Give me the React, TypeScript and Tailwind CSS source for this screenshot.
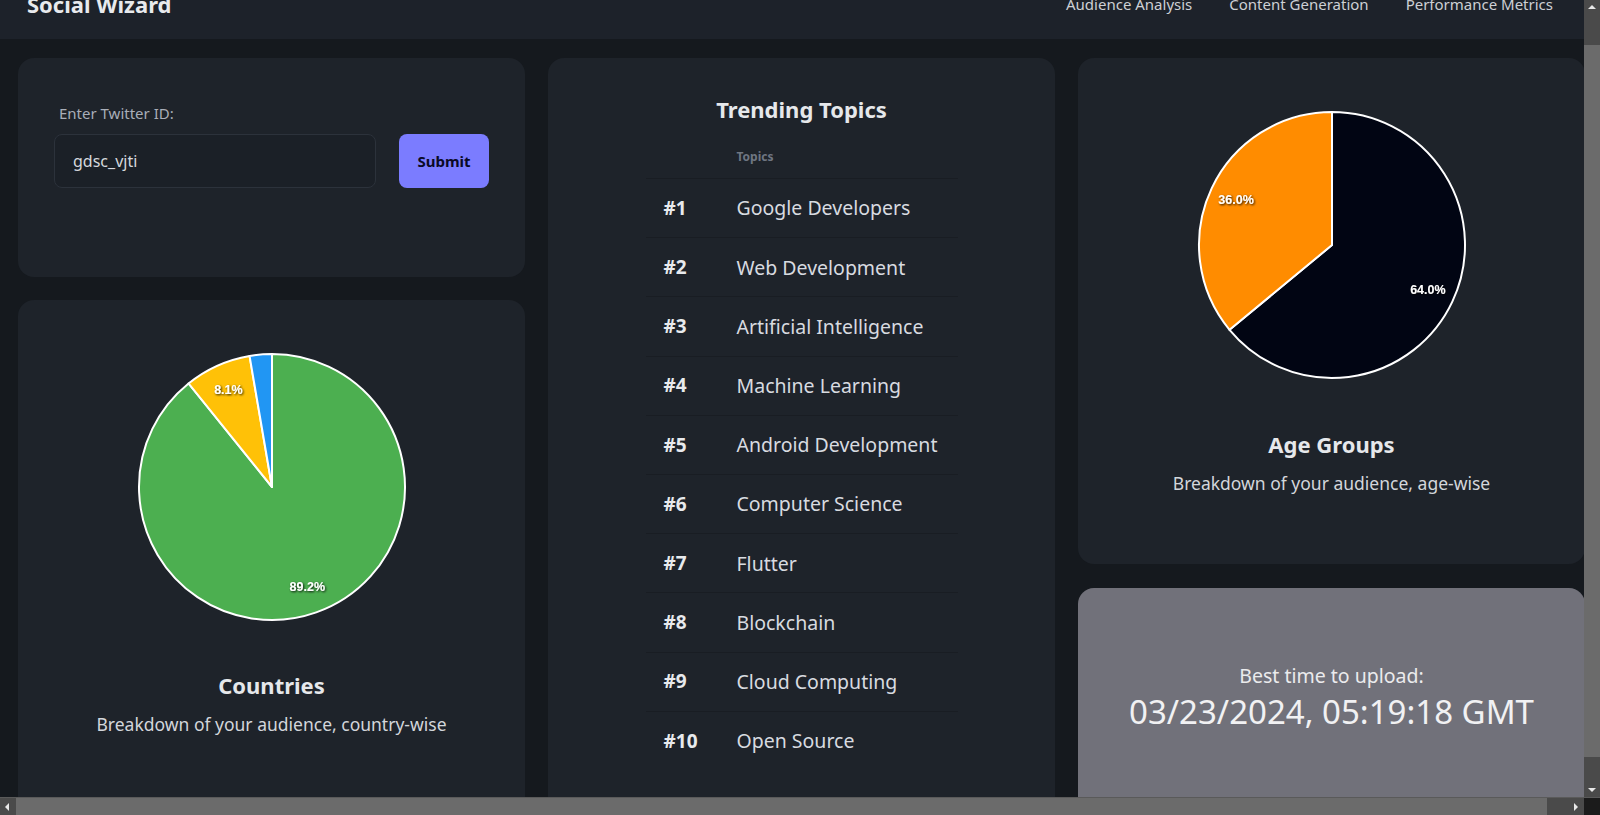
import React from "react";

type Slice = { value: number; color: string; label?: string };

function polar(c: number, r: number, frac: number): [number, number] {
  const a = frac * 2 * Math.PI;
  return [c + r * Math.sin(a), c - r * Math.cos(a)];
}

function Pie({ data, id }: { data: Slice[]; id: string }) {
  const c = 135;
  const r = 133;
  let acc = 0;
  const slices = data.map((d) => {
    const start = acc;
    acc += d.value;
    return { ...d, start, end: acc };
  });
  return (
    <svg width={270} height={270} viewBox="0 0 270 270">
      <defs>
        <filter id={id} x="-50%" y="-50%" width="200%" height="200%">
          <feDropShadow dx="1" dy="1" stdDeviation="1" floodColor="#000" floodOpacity="0.9" />
        </filter>
      </defs>
      {slices.map((s, i) => {
        const [x1, y1] = polar(c, r, s.start);
        const [x2, y2] = polar(c, r, s.end);
        const large = s.end - s.start > 0.5 ? 1 : 0;
        return (
          <path
            key={i}
            d={`M${c},${c} L${x1},${y1} A${r},${r} 0 ${large} 1 ${x2},${y2} Z`}
            fill={s.color}
            stroke="#ffffff"
            strokeWidth={2}
            strokeLinejoin="round"
          />
        );
      })}
      {slices.map((s, i) => {
        if (!s.label) return null;
        const [x, y] = polar(c, 106, (s.start + s.end) / 2);
        return (
          <text
            key={"t" + i}
            x={x}
            y={y}
            textAnchor="middle"
            dominantBaseline="central"
            fill="#ffffff"
            fontSize={12.5}
            fontWeight={700}
            fontFamily='"Liberation Sans", Arial, sans-serif'
            filter={`url(#${id})`}
          >
            {s.label}
          </text>
        );
      })}
    </svg>
  );
}

const topics = [
  "Google Developers",
  "Web Development",
  "Artificial Intelligence",
  "Machine Learning",
  "Android Development",
  "Computer Science",
  "Flutter",
  "Blockchain",
  "Cloud Computing",
  "Open Source",
];

function Tri({ dir }: { dir: "up" | "down" | "left" | "right" }) {
  const pts =
    dir === "up"
      ? "4,9 8,5 12,9"
      : dir === "down"
      ? "4,6 8,10 12,6"
      : dir === "left"
      ? "9,4 5,8 9,12"
      : "6,4 10,8 6,12";
  return (
    <svg width={16} height={16} viewBox="0 0 16 16">
      <polygon points={pts} fill="#e8e8e8" />
    </svg>
  );
}

export default function App() {
  return (
    <div
      className="w-[1600px] h-[815px] overflow-hidden flex flex-col bg-[#15191e]"
      style={{ fontFamily: '"Noto Sans", "Open Sans", sans-serif' }}
    >
      <div className="flex flex-1 min-h-0">
        <div className="flex-1 min-w-0 overflow-hidden">
          <div className="-mt-[30px] w-[1584px]">
            <header className="h-[69px] bg-[#1d222a] flex items-center justify-between pl-[27px] pr-[31px] pb-[1px]">
              <div className="text-[22px] font-bold text-[#e8eaed]">Social Wizard</div>
              <nav className="flex gap-[37px] text-[15px] text-[#cdd0d5]">
                <span>Audience Analysis</span>
                <span>Content Generation</span>
                <span>Performance Metrics</span>
              </nav>
            </header>
            <main className="grid grid-cols-[507px_507px_507px] gap-x-[23px] pl-[18px] pt-[19px]">
              <div className="flex flex-col gap-[23px]">
                <div className="h-[219px] rounded-2xl bg-[#1e232a] pl-[36px] pt-[44px]">
                  <div className="pl-[5px] text-[15px] leading-[22px] text-[#a9aeb8]">Enter Twitter ID:</div>
                  <div className="mt-[10px] flex gap-[23px]">
                    <div className="w-[322px] h-[54px] rounded-lg border border-[#2c323b] bg-[#1b2027] flex items-center pl-[18px] text-[16px] text-[#d5d8dd]">
                      gdsc_vjti
                    </div>
                    <button className="w-[90px] h-[54px] rounded-lg bg-[#7b7cff] text-[15px] font-bold text-[#0a0a26]">
                      Submit
                    </button>
                  </div>
                </div>
                <div className="h-[520px] rounded-2xl bg-[#1e232a] flex flex-col items-center pt-[52px]">
                  <Pie
                    id="sh1"
                    data={[
                      { value: 0.892, color: "#4caf50", label: "89.2%" },
                      { value: 0.081, color: "#ffc107", label: "8.1%" },
                      { value: 0.027, color: "#2196f3" },
                    ]}
                  />
                  <div className="mt-[47px] text-[22px] leading-[32px] font-bold text-[#e6e8eb]">Countries</div>
                  <div className="mt-[10px] text-[17.5px] leading-[26px] text-[#d3d6db]">
                    Breakdown of your audience, country-wise
                  </div>
                </div>
              </div>
              <div className="h-[760px] rounded-2xl bg-[#1e232a] flex flex-col items-center pt-[35px]">
                <div className="text-[22px] leading-[32px] font-bold text-[#e6e8eb]">Trending Topics</div>
                <div className="mt-[7px] w-[312px]">
                  <div className="h-[46px] flex items-end pb-[12px] pl-[91px] text-[12px] font-bold text-[#6f7682]">Topics</div>
                  {topics.map((t, i) => (
                    <div
                      key={t}
                      className="h-[59.2px] flex items-center border-t border-[#191d23]"
                    >
                      <div className="w-[91px] pl-[18px] text-[19px] font-bold text-[#e8eaed]">#{i + 1}</div>
                      <div className="text-[19.5px] text-[#d8dbe0]">{t}</div>
                    </div>
                  ))}
                </div>
              </div>
              <div className="flex flex-col gap-[24px]">
                <div className="h-[506px] rounded-2xl bg-[#1e232a] flex flex-col items-center pt-[52px]">
                  <Pie
                    id="sh2"
                    data={[
                      { value: 0.64, color: "#010513", label: "64.0%" },
                      { value: 0.36, color: "#ff8c00", label: "36.0%" },
                    ]}
                  />
                  <div className="mt-[48px] text-[22px] leading-[32px] font-bold text-[#e6e8eb]">Age Groups</div>
                  <div className="mt-[10px] text-[17.5px] leading-[26px] text-[#d3d6db]">
                    Breakdown of your audience, age-wise
                  </div>
                </div>
                <div className="h-[260px] rounded-2xl bg-[#71717a] flex flex-col items-center pt-[74px]">
                  <div className="text-[19.5px] leading-[28px] text-[#ebebed]">Best time to upload:</div>
                  <div className="text-[33px] leading-[44px] text-[#f1f1f3]">03/23/2024, 05:19:18 GMT</div>
                </div>
              </div>
            </main>
          </div>
        </div>
        <div className="w-[16px] flex flex-col bg-[#4a4a4a]">
          <div className="h-[15px] flex items-center justify-center">
            <Tri dir="up" />
          </div>
          <div className="h-[30px]" />
          <div className="h-[712px] bg-[#6b6b6b]" />
          <div className="flex-1" />
          <div className="h-[15px] flex items-center justify-center">
            <Tri dir="down" />
          </div>
        </div>
      </div>
      <div className="h-[18px] flex bg-[#4a4a4a] border-t border-[#5a5a5a]">
        <div className="w-[16px] flex items-center justify-center">
          <Tri dir="left" />
        </div>
        <div className="w-[1531px] bg-[#6b6b6b]" />
        <div className="flex-1" />
        <div className="w-[16px] flex items-center justify-center">
          <Tri dir="right" />
        </div>
        <div className="w-[16px] bg-[#1b1b1b]" />
      </div>
    </div>
  );
}
